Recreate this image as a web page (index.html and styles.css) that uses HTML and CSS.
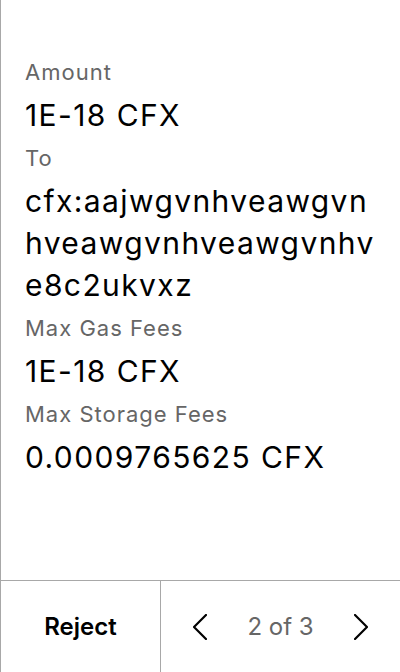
FILE: index.html
```html
<!DOCTYPE html>
<html>
<head>
<meta charset="utf-8">
<link rel="stylesheet" href="styles.css">
</head>
<body>
<div class="screen">
  <main class="details">
    <div class="label">Amount</div>
    <div class="value">1E-18 CFX</div>
    <div class="label">To</div>
    <div class="value address">cfx:aajwgvnhveawgvnhveawgvnhveawgvnhve8c2ukvxz</div>
    <div class="label">Max Gas Fees</div>
    <div class="value">1E-18 CFX</div>
    <div class="label">Max Storage Fees</div>
    <div class="value">0.0009765625 CFX</div>
  </main>
  <footer class="actions">
    <button class="reject">Reject</button>
    <div class="pager">
      <button class="nav" aria-label="Previous">
        <svg width="14" height="26" viewBox="0 0 14 26"><polyline points="13,1 1,13 13,25" fill="none" stroke="#000" stroke-width="2.2" stroke-linecap="square" stroke-linejoin="miter"/></svg>
      </button>
      <span class="count">2 of 3</span>
      <button class="nav" aria-label="Next">
        <svg width="14" height="26" viewBox="0 0 14 26"><polyline points="1,1 13,13 1,25" fill="none" stroke="#000" stroke-width="2.2" stroke-linecap="square" stroke-linejoin="miter"/></svg>
      </button>
    </div>
  </footer>
</div>
</body>
</html>
```
FILE: styles.css
```css
* { box-sizing: border-box; }
html, body { margin: 0; padding: 0; background: #fff; }
body { font-family: Inter, "Noto Sans", sans-serif; color: #000; }
.screen {
  width: 400px;
  height: 672px;
  border-left: 1px solid #a8a8a8;
  display: flex;
  flex-direction: column;
}
.details {
  flex: 1;
  padding: 50px 24px 0 24px;
}
.label {
  font-size: 22px;
  letter-spacing: 1px;
  line-height: 44px;
  color: #666;
}
.value {
  font-size: 30px;
  letter-spacing: 1.4px;
  line-height: 42px;
  color: #000;
}
.address { word-break: break-all; }
.actions {
  height: 92px;
  border-top: 1px solid #a8a8a8;
  margin-left: -1px;
  display: flex;
}
button {
  font-family: inherit;
  background: none;
  border: none;
  padding: 0;
  margin: 0;
  cursor: pointer;
}
.reject {
  width: 161px;
  border-left: 1px solid #a8a8a8;
  border-right: 1px solid #a8a8a8;
  font-size: 24px;
  font-weight: 600;
  color: #000;
}
.pager {
  flex: 1;
  display: flex;
  align-items: center;
  justify-content: space-between;
  padding: 0 32px 0 32px;
}
.nav {
  display: flex;
  align-items: center;
  justify-content: center;
  width: 14px;
  height: 26px;
}
.count {
  font-size: 24px;
  color: #666;
}
```
